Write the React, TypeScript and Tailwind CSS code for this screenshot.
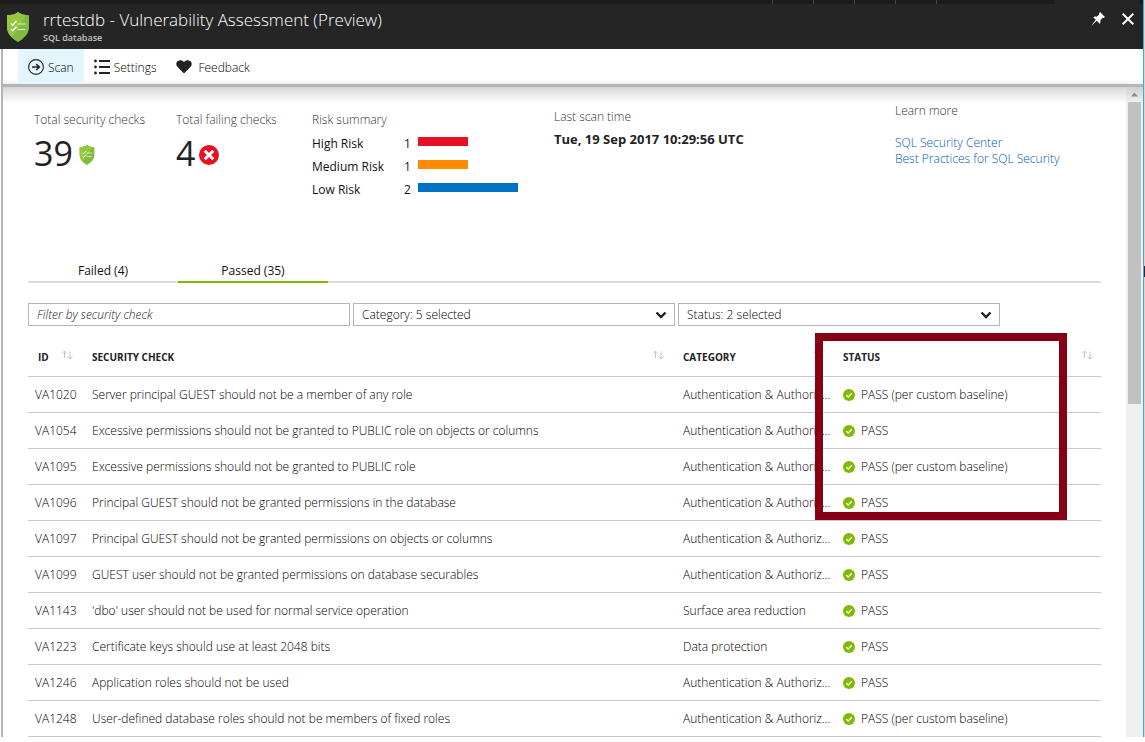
import React from 'react';

const checks = [
  ['VA1020', 'Server principal GUEST should not be a member of any role', 'Authentication & Authorization', 'PASS (per custom baseline)'],
  ['VA1054', 'Excessive permissions should not be granted to PUBLIC role on objects or columns', 'Authentication & Authorization', 'PASS'],
  ['VA1095', 'Excessive permissions should not be granted to PUBLIC role', 'Authentication & Authorization', 'PASS (per custom baseline)'],
  ['VA1096', 'Principal GUEST should not be granted permissions in the database', 'Authentication & Authorization', 'PASS'],
  ['VA1097', 'Principal GUEST should not be granted permissions on objects or columns', 'Authentication & Authorization', 'PASS'],
  ['VA1099', 'GUEST user should not be granted permissions on database securables', 'Authentication & Authorization', 'PASS'],
  ['VA1143', "'dbo' user should not be used for normal service operation", 'Surface area reduction', 'PASS'],
  ['VA1223', 'Certificate keys should use at least 2048 bits', 'Data protection', 'PASS'],
  ['VA1246', 'Application roles should not be used', 'Authentication & Authorization', 'PASS'],
  ['VA1248', 'User-defined database roles should not be members of fixed roles', 'Authentication & Authorization', 'PASS (per custom baseline)'],
];

const risks = [
  { label: 'High Risk', count: 1, bar: 'w-[50px] bg-[#e81123]' },
  { label: 'Medium Risk', count: 1, bar: 'w-[50px] bg-[#ff8c00]' },
  { label: 'Low Risk', count: 2, bar: 'w-[100px] bg-[#0072c6]' },
];

function Shield({ className }: { className: string }) {
  return (
    <svg viewBox="0 0 22 30" className={className} aria-hidden="true">
      <path d="M11 0C8.500 2.200 4.500 3.200 0 3.200V15c0 7 5 11.500 11 15 6-3.500 11-8 11-15V3.200C17.500 3.200 13.500 2.200 11 0Z" fill="#7fba42" />
      <path d="M11 0C8.500 2.200 4.500 3.200 0 3.200V15c0 4.500 2.100 8 5.200 10.800L19.500 3.100C16.200 2.800 13 1.800 11 0Z" fill="#95c83d" />
      <path d="m4 11.500 1.800 1.800L9.500 9M4 17l1.800 1.800L9.500 14.500" fill="none" stroke="#fff" strokeWidth="1.400" />
      <path d="M10.500 12H18.500M10.500 17.500H18.500" stroke="#e4f1d0" strokeWidth="1.200" />
    </svg>
  );
}

function SortIcon() {
  return (
    <svg viewBox="0 0 12 10" className="mb-1 h-[10px] w-3 shrink-0" fill="none" stroke="#c4c4c4" aria-hidden="true">
      <path d="M3.500 8V1M1 3.500 3.500 1 6 3.500M9 1.500V9M6.500 6.500 9 9l2.500-2.500" />
    </svg>
  );
}

function PassIcon() {
  return (
    <svg viewBox="0 0 12 12" className="size-3 shrink-0" aria-hidden="true">
      <circle cx="6" cy="6" r="6" fill="#7fba00" />
      <path d="m3.300 6.200 1.900 1.900L8.800 4.200" fill="none" stroke="#fff" strokeWidth="1.400" />
    </svg>
  );
}

function Filter({ label, text }: { label: string; text: string }) {
  return (
    <div className="relative w-[322px]">
      <select aria-label={label} className="h-[23px] w-full appearance-none border border-[#b5b5b5] bg-white px-2 text-xs font-light text-black">
        <option>{text}</option>
      </select>
      <svg viewBox="0 0 12 8" className="pointer-events-none absolute top-2 right-2 h-2 w-3" fill="none" stroke="#222" strokeWidth="2.400" aria-hidden="true">
        <path d="m1.500 1.500 4.500 4.500 4.500-4.500" />
      </svg>
    </div>
  );
}

function HeaderCell({ title, className }: { title: string; className: string }) {
  return (
    <th scope="col" className={`h-[38px] p-0 text-left text-[10px] font-bold text-[#222] ${className}`}>
      <div className="flex items-center justify-between">
        <span>{title}</span>
        <SortIcon />
      </div>
    </th>
  );
}

export default function App() {
  return (
    <div className="flex bg-white font-['Open_Sans','Noto_Sans',sans-serif] text-xs leading-4 font-light text-black">
      <div className="min-w-0 flex-1">
        <div className="flex h-1 justify-end bg-[#1b1b1b]">
          <i className="w-[41px] border-l border-[#484848]" />
          <i className="w-[41px] border-l border-[#484848]" />
          <i className="w-[41px] border-l border-[#484848]" />
          <i className="w-[41px] border-l border-[#484848]" />
          <i className="w-[118px] border-l border-[#484848]" />
          <i className="mr-1 w-[85px] bg-[#252525]" />
        </div>
        <header className="flex h-[45px] items-start bg-[#252525] pr-[9px] pl-[7px] text-white">
          <Shield className="mt-2 h-[30px] w-[22px]" />
          <div className="ml-[14px] flex-1 pt-1">
            <h1 className="text-[17px] leading-6 text-white">rrtestdb - Vulnerability Assessment (Preview)</h1>
            <p className="text-[9px] leading-3 font-semibold text-[#c4c4c4]">SQL database</p>
          </div>
          <button aria-label="Pin" className="mt-2 mr-[17px]">
            <svg viewBox="0 0 14 14" className="size-[14px]" fill="#fff">
              <path d="M9 0 14 5l-1.500.9-.9-.2-2.400 2.700c.5 1.400.3 2.500-.5 3.300L5.800 8.800 0 14 4.800 7.800 2.200 5.200c.9-.7 2-.9 3.400-.4l2.700-2.400-.2-1Z" />
            </svg>
          </button>
          <button aria-label="Close" className="mt-[9px]">
            <svg viewBox="0 0 12 12" className="size-3" stroke="#fff" strokeWidth="2">
              <path d="m.7.7 10.600 10.600M11.300.7.7 11.300" />
            </svg>
          </button>
        </header>

        <div className="ml-px border-l-2 border-[#b4b4b7]">
          <nav className="flex h-[38px] border-b-[3px] border-[#b5b5b5] bg-white bg-linear-to-t from-[#f2f2f2] to-transparent to-[5px] pl-[15px]">
            <button className="flex items-center gap-1 bg-[#e3f6fe] pr-2.5 pl-2.5">
              <svg viewBox="0 0 16 16" className="size-4" fill="none" stroke="#222" aria-hidden="true">
                <circle cx="8" cy="8" r="7.400" strokeWidth="1.100" />
                <path d="M4 8h7M8.200 5 11.300 8l-3.100 3" strokeWidth="1.700" />
              </svg>
              <span className="pt-0.5">Scan</span>
            </button>
            <button className="ml-2.5 flex items-center gap-1">
              <svg viewBox="0 0 16 16" className="size-4" fill="#222" aria-hidden="true">
                <path d="M5 1h11v2H5zM5 7h11v2H5zM5 13h11v2H5z" />
                <circle cx="1.500" cy="2" r="1.400" />
                <circle cx="1.500" cy="8" r="1.400" />
                <circle cx="1.500" cy="14" r="1.400" />
              </svg>
              <span className="pt-0.5">Settings</span>
            </button>
            <button className="ml-5 flex items-center gap-1.5">
              <svg viewBox="0 0 16 14" className="h-[14px] w-4" fill="#222" aria-hidden="true">
                <path d="M8 13.500 1.400 6.800C-.3 5 .1 2.400 1.600 1.200 3.500-.3 6.500-.1 8 2.200 9.500-.1 12.500-.3 14.400 1.200c1.500 1.200 1.900 3.800.2 5.600Z" />
              </svg>
              <span className="pt-0.5">Feedback</span>
            </button>
          </nav>

          <div className="flex">
            <main className="min-w-0 flex-1 bg-linear-to-b from-[#d6d6d6] to-white to-[16px] pr-[25px] pl-[25px]">
              <section className="flex h-[173px] pl-1.5">
                <div className="w-[142px] pt-[25px]">
                  <h2 className="text-[#333]">Total security checks</h2>
                  <div className="flex items-center gap-1.5">
                    <span className="text-[34px] leading-[50px] font-medium text-[#222]">39</span>
                    <Shield className="mt-1 h-5 w-4" />
                  </div>
                </div>
                <div className="w-[136px] pt-[25px]">
                  <h2 className="text-[#333]">Total failing checks</h2>
                  <div className="flex items-center gap-1">
                    <span className="text-[34px] leading-[50px] font-medium text-[#222]">4</span>
                    <svg viewBox="0 0 20 20" className="mt-1 size-5" aria-hidden="true">
                      <circle cx="10" cy="10" r="10" fill="#e81123" />
                      <path d="m5.700 5.700 8.600 8.600M14.300 5.700l-8.600 8.600" stroke="#fff" strokeWidth="3" />
                    </svg>
                  </div>
                </div>
                <div className="w-[242px] pt-[25px]">
                  <h2 className="mb-1 text-[#333]">Risk summary</h2>
                  {risks.map((r) => (
                    <div key={r.label} className="flex h-[23px] items-center font-normal text-[#111]">
                      <span className="w-[92px]">{r.label}</span>
                      <span className="w-[14px]">{r.count}</span>
                      <span className={`mb-[5px] h-[9px] ${r.bar}`} />
                    </div>
                  ))}
                </div>
                <div className="min-w-0 flex-1 pt-[22px]">
                  <h2 className="text-[#333]">Last scan time</h2>
                  <p className="mt-1.5 text-[13px] font-bold text-[#222]">Tue, 19 Sep 2017 10:29:56 UTC</p>
                </div>
                <div className="w-[206px] pt-4">
                  <h2 className="mb-4 text-[#333]">Learn more</h2>
                  <a href="#center" className="block text-[#005db3]">SQL Security Center</a>
                  <a href="#practices" className="block text-[#005db3]">Best Practices for SQL Security</a>
                </div>
              </section>

              <div role="tablist" className="flex h-[23px] border-b-2 border-[#dcdcdc] font-normal text-[#111]">
                <button role="tab" aria-selected="false" className="h-[23px] w-[150px] border-b-2 border-transparent">Failed (4)</button>
                <button role="tab" aria-selected="true" className="h-[23px] w-[150px] border-b-2 border-[#7fba00]">Passed (35)</button>
              </div>

              <div className="mt-5 flex gap-[3px]">
                <input aria-label="Filter by security check" placeholder="Filter by security check" className="h-[23px] w-[322px] border border-[#b5b5b5] px-2 italic placeholder:text-[#222]" />
                <Filter label="Category" text="Category: 5 selected" />
                <Filter label="Status" text="Status: 2 selected" />
              </div>

              <div className="relative mt-3">
                <table className="w-full table-fixed border-collapse">
                  <colgroup>
                    <col className="w-[57px]" />
                    <col />
                    <col className="w-[160px]" />
                    <col className="w-[265px]" />
                  </colgroup>
                  <thead>
                    <tr className="border-b border-[#c8c8c8]">
                      <HeaderCell title="ID" className="pr-3 pl-2.5" />
                      <HeaderCell title="SECURITY CHECK" className="pr-3 pl-[7px]" />
                      <HeaderCell title="CATEGORY" className="pr-3 pl-[7px]" />
                      <HeaderCell title="STATUS" className="pr-2 pl-[7px]" />
                    </tr>
                  </thead>
                  <tbody>
                    {checks.map(([id, check, category, status]) => (
                      <tr key={id} className="h-9 border-b border-[#c8c8c8]">
                        <td className="p-0 pt-0.5 pl-[7px]">{id}</td>
                        <td className="truncate p-0 pt-0.5 pl-[7px]">{check}</td>
                        <td className="truncate p-0 pt-0.5 pr-1 pl-[7px]">{category}</td>
                        <td className="p-0 pt-0.5 pl-[7px]">
                          <div className="flex items-center gap-1.5">
                            <PassIcon />
                            {status}
                          </div>
                        </td>
                      </tr>
                    ))}
                  </tbody>
                </table>
                <div className="pointer-events-none absolute -top-[5px] right-[34px] h-[187px] w-[252px] border-8 border-[#880015]" />
              </div>
            </main>
            <div className="flex w-[17px] flex-col items-center bg-[#f0f0f0]" aria-hidden="true">
              <svg viewBox="0 0 17 15" className="h-[15px] w-[17px] bg-linear-to-b from-[#d0d0d0] to-[#f0f0f0]">
                <path d="M5 9.500 8.500 5.500 12 9.500Z" fill="#8a8a8a" />
              </svg>
              <div className="h-[302px] w-[13px] bg-[#c1c1c1]" />
            </div>
          </div>
        </div>
      </div>
      <div className="w-0.5 border-l border-[#4ba3dc] bg-[#d5d5d5] pt-[266px]">
        <div className="h-[11px] bg-[#1f2a44]" />
      </div>
    </div>
  );
}
